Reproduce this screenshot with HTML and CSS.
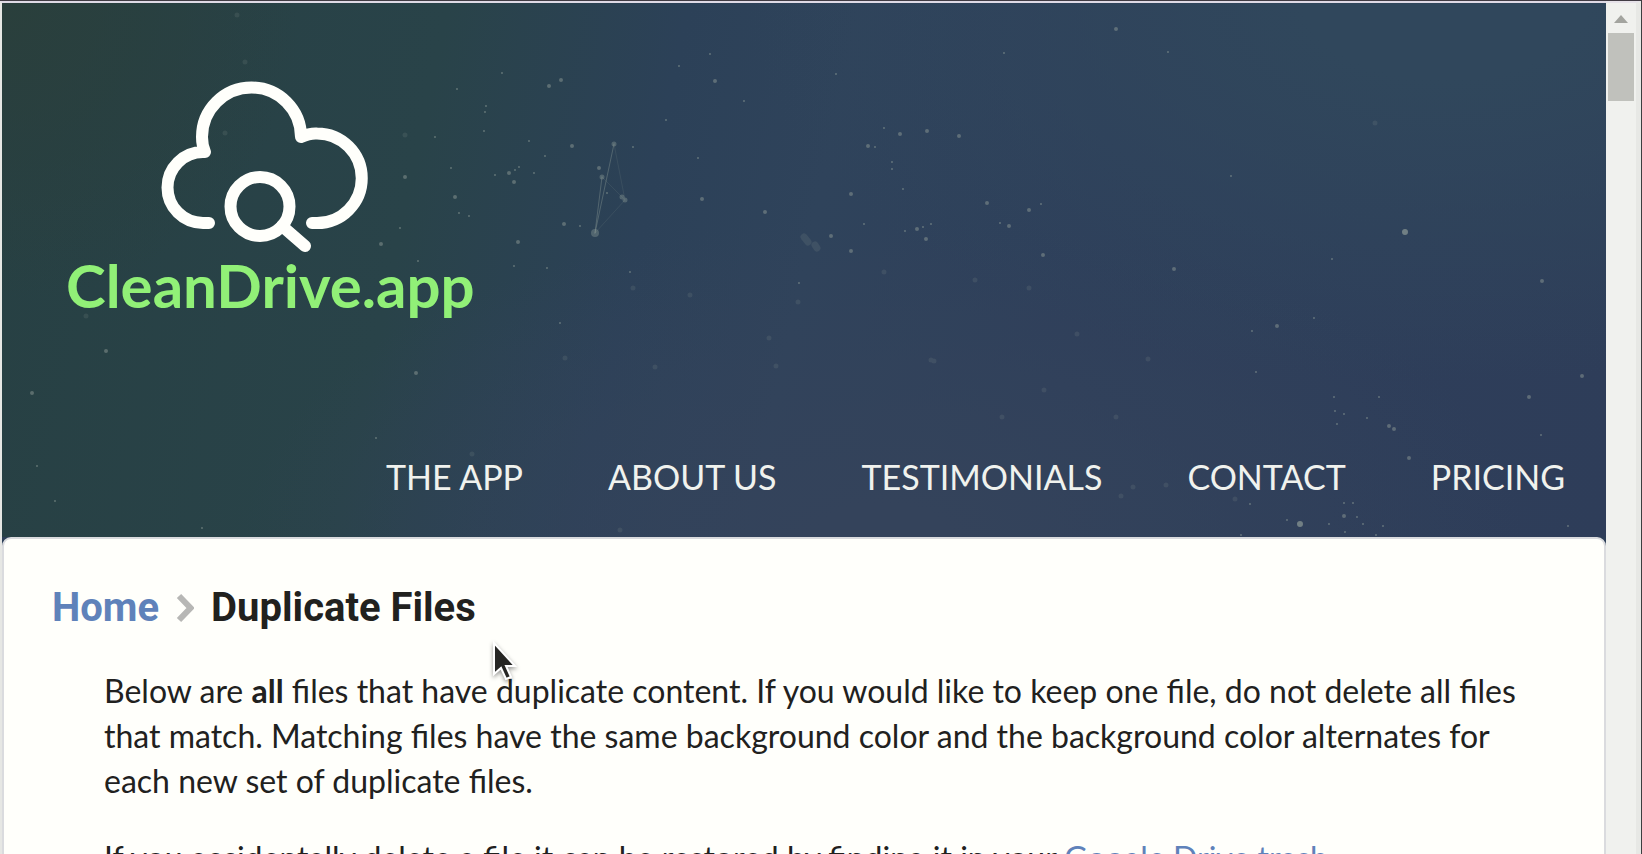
FILE: index.html
```html
<!DOCTYPE html>
<html lang="en">
<head>
<meta charset="utf-8">
<title>Duplicate Files - CleanDrive.app</title>
<link rel="stylesheet" href="styles.css">
</head>
<body>
<div class="window">
  <div class="page">
    <header class="hero">
      <svg class="stars" viewBox="2 3 1604 534" preserveAspectRatio="xMinYMin slice" aria-hidden="true">
        <path class="star-small" d="M502 73h0M457 89h0M486 106h0M485 112h0M484 131h0M435 137h0M529 141h0M545 156h0M451 168h0M495 175h0M519 167h0M515 170h0M534 173h0M459 213h0M469 216h0M400 228h0M580 226h0M514 266h0M547 268h0M418 261h0M633 147h0M607 193h0M666 120h0M710 54h0M679 66h0M744 101h0M698 158h0M836 74h0M884 128h0M875 147h0M892 162h0M892 169h0M903 189h0M864 224h0M923 227h0M931 224h0M905 231h0M630 272h0M560 323h0M799 283h0M1004 53h0M1168 52h0M1231 176h0M1041 204h0M1000 223h0M1332 259h0M1252 331h0M1314 318h0M1256 372h0M1379 397h0M1335 411h0M1344 414h0M1367 418h0M1337 424h0M1541 435h0M1334 397h0M1250 504h0M1287 520h0M1344 503h0M1353 503h0M1357 517h0M1363 524h0M1329 524h0M1345 532h0M1376 535h0M1241 535h0M1568 526h0M1383 526h0M37 466h0M55 501h0M202 528h0M376 438h0"/>
        <path class="star-mid" d="M549 86h0M561 80h0M572 146h0M509 173h0M514 182h0M405 177h0M455 197h0M564 224h0M518 242h0M381 244h0M599 168h0M715 81h0M702 199h0M765 212h0M900 134h0M927 131h0M868 146h0M851 194h0M831 236h0M851 251h0M917 229h0M926 239h0M1116 29h0M959 136h0M987 203h0M1029 210h0M1009 226h0M1043 255h0M1174 269h0M1542 281h0M1277 326h0M1529 397h0M1582 376h0M1389 426h0M1394 429h0M1409 458h0M1344 516h0M32 393h0M106 351h0M416 373h0"/>
        <path class="star-faint" d="M405 135h0M884 272h0M633 288h0M690 295h0M798 302h0M769 338h0M931 360h0M934 361h0M565 358h0M655 367h0M776 366h0M1375 123h0M975 280h0M1029 288h0M1148 359h0M1077 334h0M1044 390h0M1002 417h0M1116 417h0M1133 487h0M1121 496h0M1166 485h0M1235 499h0M472 454h0M620 530h0M237 15h0M225 133h0M86 316h0M245 62h0"/>
        <path class="star-big" d="M1405 232h0M1300 524h0"/>
        <path class="smudge" d="M804 237l4 5M815 245l2 3"/>
        <path class="link-strong" d="M614 144L595 233M602 177L595 233"/>
        <path class="link-weak" d="M614 144L625 200L595 233M602 177L625 200"/>
        <path class="node" d="M614 144h0M602 177h0M622 197h0M625 200h0"/>
        <path class="node-big" d="M595 233h0"/>
      </svg>
      <a class="brand" href="#">
        <svg class="brand-icon" viewBox="160 81 208 172" aria-hidden="true">
          <path d="M208 223H202A35.500 35.500 0 0 1 202 152H204Q201 145 201 137A49.500 49.500 0 0 1 300 137Q309 133 316 133.500A44.700 44.700 0 0 1 316 223H311"/>
          <circle cx="259" cy="206.500" r="29.500"/>
          <path d="M281 226L304 246"/>
        </svg>
        <span class="brand-name">CleanDrive.app</span>
      </a>
      <nav class="menu">
        <a href="#">THE APP</a>
        <a href="#">ABOUT US</a>
        <a href="#">TESTIMONIALS</a>
        <a href="#">CONTACT</a>
        <a href="#">PRICING</a>
      </nav>
    </header>
    <main class="panel">
      <h1 class="crumbs">
        <a href="#">Home</a>
        <svg class="chevron" viewBox="0 0 18 30" aria-hidden="true"><path d="M3 3L14.500 15L3 27"/></svg>
        <span>Duplicate Files</span>
      </h1>
      <div class="copy">
        <p>Below are <strong>all</strong> files that have duplicate content. If you would like to keep one file, do not delete all files that match. Matching files have the same background color and the background color alternates for each new set of duplicate files.</p>
        <p>If you accidentally delete a file it can be restored by finding it in your <a href="#">Google Drive trash</a>.</p>
      </div>
    </main>
  </div>
  <div class="scrollbar" aria-hidden="true">
    <svg class="arrow" viewBox="0 0 14 8"><path d="M7 0L14 8H0Z"/></svg>
    <div class="thumb"></div>
  </div>
  <svg class="cursor" viewBox="0 0 28 44" aria-hidden="true">
    <path d="M4 3V34L11 28L16 39L21 37L16 26H25Z"/>
  </svg>
</div>
</body>
</html>
```

FILE: styles.css
```css
* {
  box-sizing: border-box;
}

body {
  margin: 0;
  background: #fffffb;
  color: #21211e;
  font-family: Lato, "Liberation Sans", sans-serif;
}

a {
  color: #5f82ba;
  text-decoration: none;
}

.window {
  position: relative;
  display: flex;
  height: 100vh;
  overflow: hidden;
  border-top: 1px solid #413c44;
  border-right: 1px solid #3c3e40;
}

.page {
  flex: 1;
  min-width: 0;
  border-top: 2px solid #dfdae6;
  border-left: 2px solid #e6e7e4;
  background: #2d3f58;
}

.hero {
  position: relative;
  display: flex;
  flex-direction: column;
  justify-content: space-between;
  height: 534px;
  padding: 78px 41px 38px 64px;
  background:
    radial-gradient(ellipse 700px 380px at 90% 0%, #30475c 20%, #30475c00 100%),
    radial-gradient(ellipse 640px 320px at 55% 100%, #34435b 10%, #34435b00 100%),
    radial-gradient(ellipse 300px 300px at 0% 0%, #2a3f3c, #2a3f3c00 100%),
    linear-gradient(102deg, #274043 0%, #294349 26%, #2c4158 40%, #2f435b 50%, #2e3f5b 66%, #2e3d59 100%);
}

.stars {
  position: absolute;
  inset: 0;
  width: 100%;
  height: 100%;
  fill: none;
  stroke: #8d9a96;
  stroke-linecap: round;
}

.star-small { stroke-width: 2px; opacity: .55; }
.star-mid { stroke-width: 4px; opacity: .5; }
.star-faint { stroke-width: 5px; opacity: .16; }
.star-big { stroke-width: 6px; opacity: .7; }
.smudge { stroke-width: 7px; opacity: .16; }
.link-strong { stroke-width: 1px; opacity: .4; }
.link-weak { stroke-width: 1px; opacity: .14; }
.node { stroke-width: 5px; opacity: .4; }
.node-big { stroke-width: 8px; opacity: .4; }

.brand {
  position: relative;
  display: flex;
  flex-direction: column;
  align-items: center;
  align-self: flex-start;
  color: #91f077;
}

.brand-icon {
  width: 208px;
  height: 172px;
  margin-right: 11px;
  fill: none;
  stroke: #fffffb;
  stroke-width: 12px;
  stroke-linecap: round;
  stroke-linejoin: round;
}

.brand-name {
  font-size: 60px;
  font-weight: 700;
  line-height: 64px;
}

.menu {
  position: relative;
  display: flex;
  justify-content: flex-end;
  gap: 85px;
  font-size: 34px;
  line-height: 44px;
}

.menu a {
  color: #f0f2ee;
}

.panel {
  min-height: 400px;
  padding: 45px 48px;
  border: 2px solid #dadbde;
  border-radius: 9px 9px 0 0;
  background: #fffffb;
}

.crumbs {
  display: flex;
  align-items: center;
  gap: 17px;
  margin: 0;
  font: 700 40px/48px Roboto, "Liberation Sans", sans-serif;
}

.chevron {
  width: 18px;
  height: 30px;
  fill: none;
  stroke: #b7b7b5;
  stroke-width: 6px;
}

.copy {
  padding: 36px 30px 36px 52px;
  font-size: 32px;
  line-height: 45px;
}

.copy p {
  margin: 0 0 32px;
}

.scrollbar {
  display: flex;
  flex-direction: column;
  gap: 10px;
  width: 35px;
  padding: 12px 2px 0;
  border-top: 2px solid #e6e2e9;
  border-right: 5px solid #e7e8e5;
  background: #f0f1ee;
}

.arrow {
  width: 14px;
  height: 8px;
  margin-left: 6px;
  fill: #a3a49f;
}

.thumb {
  height: 68px;
  background: #c0c1bc;
}

.cursor {
  position: absolute;
  left: 490px;
  top: 639px;
  width: 28px;
  height: 44px;
  fill: #262624;
  stroke: #fff;
  stroke-width: 2px;
  filter: drop-shadow(0 2px 2px #0006);
}
```
